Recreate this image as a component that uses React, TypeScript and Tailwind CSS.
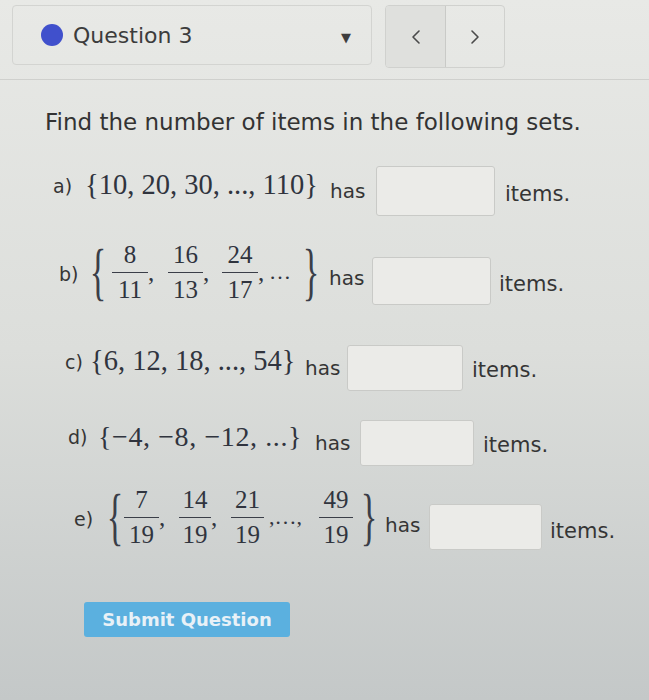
import React from 'react';
import { ChevronLeft, ChevronRight } from 'lucide-react';

// Fraction: numerator over denominator, serif like the math renderer
const Frac: React.FC<{ n: string; d: string; w: string }> = ({ n, d, w }) => (
  <span className={`${w} shrink-0 inline-flex flex-col items-center leading-none text-[25px]`}>
    <span className="pb-[5px]">{n}</span>
    <span className="self-stretch border-t-[1.5px] border-[#3a3e48]" />
    <span className="pt-[4px]">{d}</span>
  </span>
);

const BigBrace: React.FC<{ side: 'l' | 'r' }> = ({ side }) => (
  <span className="w-[16px] shrink-0 flex justify-center">
    <span className="inline-block text-[46px] leading-none scale-x-[0.75] scale-y-[1.4] text-[#3a3e48]">
      {side === 'l' ? '{' : '}'}
    </span>
  </span>
);

const Comma: React.FC<{ w: string }> = ({ w }) => (
  <span className={`${w} shrink-0 text-[25px] leading-none`}>,</span>
);

const AnswerBox: React.FC<{ w: string; h: string }> = ({ w, h }) => (
  <input
    type="text"
    className={`${w} ${h} shrink-0 bg-[#ebebe8] border border-[#c9cac7] rounded-[3px] outline-none`}
  />
);

export default function App() {
  return (
    <div className="w-[649px] h-[700px] overflow-hidden bg-gradient-to-b from-[#e8e9e6] via-[#dcdedb] to-[#c4c8c8] font-['DejaVu_Sans',sans-serif] text-[#353535]">
      {/* Header */}
      <div className="h-[80px] border-b border-[#cfd0cd] flex items-start pt-[5px] pl-[12px]">
        <div className="w-[360px] h-[60px] border border-[#d3d4d1] rounded-[4px] flex items-center pl-[28px] pr-[20px]">
          <span className="w-[22px] h-[22px] rounded-full bg-[#4050cc]" />
          <span className="ml-[10px] text-[22px] text-[#3c3c3c]">Question 3</span>
          <span className="ml-auto text-[13px] text-[#3e3e3e] mt-[6px]">▼</span>
        </div>
        <div className="ml-[13px] w-[120px] h-[63px] border border-[#d0d1ce] rounded-[4px] flex overflow-hidden">
          <div className="w-[60px] h-full bg-[#dfe0dd] border-r border-[#c9cac7] flex items-center justify-center">
            <ChevronLeft size={24} strokeWidth={1.6} className="text-[#4a4a4a]" />
          </div>
          <div className="flex-1 h-full flex items-center justify-center">
            <ChevronRight size={24} strokeWidth={1.6} className="text-[#4a4a4a]" />
          </div>
        </div>
      </div>

      {/* Body */}
      <div className="pl-[45px] pt-[26px] text-[23px] leading-[32px] text-[#333]">
        Find the number of items in the following sets.
      </div>

      {/* a */}
      <div className="mt-[28px] h-[50px] flex items-center pl-[53px]">
        <span className="text-[19px] w-[32px] shrink-0 mb-[10px]">a)</span>
        <span className="font-['Liberation_Serif',serif] text-[28.5px] leading-none text-[#30343e] w-[245px] shrink-0 mb-[12px]">
          {'{10, 20, 30, ..., 110}'}
        </span>
        <span className="text-[20px] w-[46px] shrink-0">has</span>
        <AnswerBox w="w-[119px]" h="h-[50px]" />
        <span className="ml-[10px] text-[21px] mt-[8px]">items.</span>
      </div>

      {/* b */}
      <div className="mt-[33px] h-[64px] flex items-center pl-[59px]">
        <span className="text-[19px] w-[31px] shrink-0 mb-[14px]">b)</span>
        <span className="font-['Liberation_Serif',serif] text-[#30343e] flex items-center shrink-0 mb-[18px]">
          <BigBrace side="l" />
          <span className="w-[6px]" />
          <Frac n="8" d="11" w="w-[36px]" />
          <Comma w="w-[20px]" />
          <Frac n="16" d="13" w="w-[35px]" />
          <Comma w="w-[19px]" />
          <Frac n="24" d="17" w="w-[36px]" />
          <Comma w="w-[11px]" />
          <span className="w-[24px] text-[22px] leading-none">…</span>
          <span className="w-[10px]" />
          <BigBrace side="r" />
        </span>
        <span className="ml-[10px] text-[20px] w-[43px] shrink-0 mb-[6px]">has</span>
        <AnswerBox w="w-[119px]" h="h-[48px]" />
        <span className="ml-[8px] text-[21px] mt-[8px]">items.</span>
      </div>

      {/* c */}
      <div className="mt-[32px] h-[46px] flex items-center pl-[65px]">
        <span className="text-[19px] w-[25px] shrink-0 mb-[11px]">c)</span>
        <span className="font-['Liberation_Serif',serif] text-[28.5px] leading-none text-[#30343e] w-[215px] shrink-0 mb-[13px]">
          {'{6, 12, 18, ..., 54}'}
        </span>
        <span className="text-[20px] w-[42px] shrink-0">has</span>
        <AnswerBox w="w-[116px]" h="h-[46px]" />
        <span className="ml-[9px] text-[21px] mt-[5px]">items.</span>
      </div>

      {/* d */}
      <div className="mt-[29px] h-[46px] flex items-center pl-[68px]">
        <span className="text-[19px] w-[30px] shrink-0 mb-[11px]">d)</span>
        <span className="font-['Liberation_Serif',serif] text-[28px] leading-none tracking-[0.6px] text-[#30343e] w-[217px] shrink-0 mb-[13px]">
          {'{−4, −8, −12, ...}'}
        </span>
        <span className="text-[20px] w-[45px] shrink-0">has</span>
        <AnswerBox w="w-[114px]" h="h-[46px]" />
        <span className="ml-[9px] text-[21px] mt-[5px]">items.</span>
      </div>

      {/* e */}
      <div className="mt-[29px] h-[64px] flex items-center pl-[74px]">
        <span className="text-[19px] w-[33px] shrink-0 mb-[16px]">e)</span>
        <span className="font-['Liberation_Serif',serif] text-[#30343e] flex items-center shrink-0 mb-[20px]">
          <BigBrace side="l" />
          <span className="w-[1px]" />
          <Frac n="7" d="19" w="w-[35px]" />
          <Comma w="w-[20px]" />
          <Frac n="14" d="19" w="w-[32px]" />
          <Comma w="w-[20px]" />
          <Frac n="21" d="19" w="w-[33px]" />
          <span className="w-[5px]" />
          <span className="w-[37px] text-[22px] leading-none">,…,</span>
          <span className="w-[13px]" />
          <Frac n="49" d="19" w="w-[34px]" />
          <span className="w-[8px]" />
          <BigBrace side="r" />
        </span>
        <span className="ml-[8px] text-[20px] w-[44px] shrink-0 mb-[4px]">has</span>
        <AnswerBox w="w-[113px]" h="h-[46px]" />
        <span className="ml-[8px] text-[21px] mt-[9px]">items.</span>
      </div>

      {/* Submit */}
      <div className="mt-[43px] pl-[84px]">
        <button className="w-[206px] h-[35px] bg-[#5bb0df] rounded-[3px] text-[#e8f1f7] text-[18px] font-bold">
          Submit Question
        </button>
      </div>
    </div>
  );
}
